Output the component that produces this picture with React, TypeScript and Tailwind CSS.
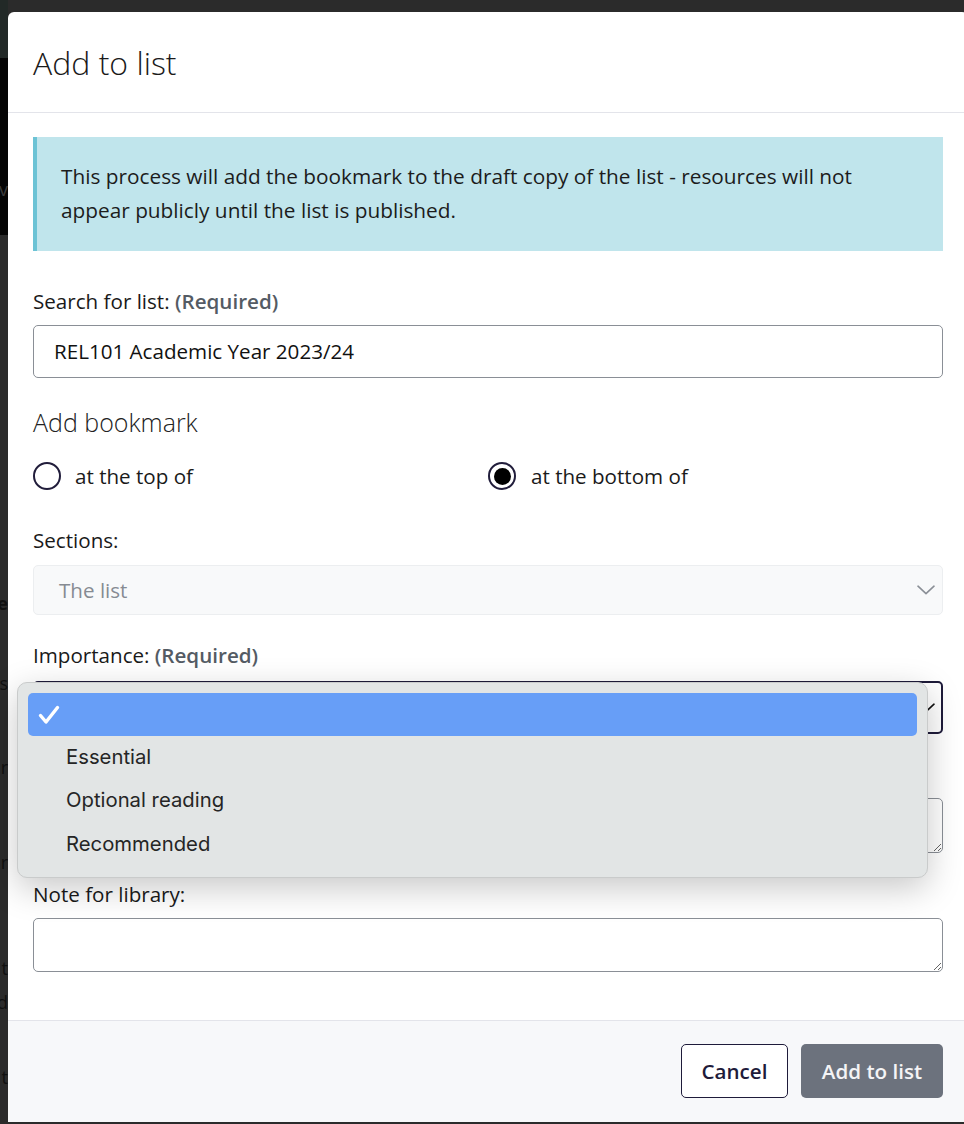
import React from "react";

const OPEN = { fontFamily: '"Open Sans", "Noto Sans", sans-serif' } as const;

function Chevron({ color }: { color: string }) {
  return (
    <svg width="18" height="10" viewBox="0 0 18 10" fill="none">
      <path d="M1 1.2 L9 8.6 L17 1.2" stroke={color} strokeWidth="1.6" strokeLinecap="round" strokeLinejoin="round" />
    </svg>
  );
}

function BgLetter({ gap, ch, bold }: { gap: number; ch: string; bold?: boolean }) {
  return (
    <div style={{ marginTop: gap }} className={`flex h-[27px] justify-end overflow-hidden whitespace-nowrap text-[18px] leading-[27px] text-[#101010] ${bold ? "font-bold" : ""}`}>
      <span>{ch}</span>
    </div>
  );
}

export default function App() {
  return (
    <div className="relative h-[1124px] w-[964px] overflow-hidden bg-[#2b2b2b]" style={OPEN}>
      {/* dimmed page behind the dialog */}
      <div className="flex h-full w-[8px] flex-col">
        <div className="h-[58px] bg-[#222927]" />
        <div className="flex h-[177px] flex-col bg-[#050505]">
          <div className="mt-[118px] flex h-[27px] justify-end overflow-hidden whitespace-nowrap text-[18px] leading-[27px] text-[#3c3c3c]">
            <span>Rev</span>
          </div>
        </div>
        <div className="flex flex-1 flex-col bg-[#2b2b2b]">
          <BgLetter gap={355} ch="The" bold />
          <BgLetter gap={53} ch="s" />
          <BgLetter gap={57} ch="r" />
          <BgLetter gap={68} ch="r" />
          <BgLetter gap={79} ch="t" />
          <BgLetter gap={7} ch="d" />
          <BgLetter gap={48} ch="t" />
        </div>
      </div>

      {/* dialog */}
      <div className="absolute left-[8px] top-[12px] flex w-[960px] flex-col overflow-visible rounded-[6px] bg-white text-[#1a1a1a]">
        <div className="border-b border-[#e3e4ea] pl-[25px] pt-[32px] pb-[30px]">
          <h1 className="text-[32px] font-light leading-[38px] text-[#1a1a1a]">Add to list</h1>
        </div>

        <div className="flex flex-col px-[25px] pt-[24px] pb-[48px] text-[20.6px]">
          <div className="h-[114px] border-l-4 border-[#6cc3d5] bg-[#c0e5ec] pl-[24px] pr-[28px] pt-[22px] text-[20.8px] leading-[34px] text-[#1c1c1c]">
            This process will add the bookmark to the draft copy of the list - resources will not appear publicly until the list is published.
          </div>

          <label className="mt-[37px] leading-[26px]">
            Search for list: <span className="font-semibold text-[#545b64]">(Required)</span>
          </label>
          <div className="mt-[11px] flex h-[53px] items-center rounded-[5px] border border-[#8a8f96] px-[20px] text-[#111]">
            REL101 Academic Year 2023/24
          </div>

          <h2 className="mt-[30px] text-[25px] font-light leading-[29px] text-[#222]">Add bookmark</h2>
          <div className="mt-[25px] grid h-[28px] grid-cols-2">
            <div className="flex items-center">
              <span className="h-[28px] w-[28px] shrink-0 rounded-full border-2 border-[#211d3b] bg-white" />
              <span className="ml-[14px] leading-[27px]">at the top of</span>
            </div>
            <div className="flex items-center">
              <span className="flex h-[28px] w-[28px] shrink-0 items-center justify-center rounded-full border-2 border-[#211d3b] bg-white">
                <span className="h-[17px] w-[17px] rounded-full bg-black" />
              </span>
              <span className="ml-[15px] leading-[27px]">at the bottom of</span>
            </div>
          </div>

          <label className="mt-[37px] leading-[27px]">Sections:</label>
          <div className="mt-[11px] flex h-[50px] items-center justify-between rounded-[5px] border border-[#eceef0] bg-[#f8f9fa] pl-[25px] pr-[7px] text-[#868b92]">
            <span>The list</span>
            <Chevron color="#8a8f96" />
          </div>

          <label className="mt-[27px] leading-[27px]">
            Importance: <span className="font-semibold text-[#545b64]">(Required)</span>
          </label>
          <div className="relative mt-[12px] h-[53px]">
            <div className="flex h-[53px] items-center justify-end rounded-[5px] border-2 border-[#1e1b3a] pr-[6px]">
              <Chevron color="#111" />
            </div>
            {/* native select popup */}
            <div
              className="absolute left-[-16px] top-[1px] z-10 flex h-[196px] w-[911px] flex-col rounded-[10px] border border-[#c9cbcb] bg-[#e2e5e5] p-[10px] shadow-[0_10px_34px_rgba(0,0,0,0.22)]"
              style={{ fontFamily: 'Inter, "Noto Sans", sans-serif' }}
            >
              <div className="flex h-[44px] items-center rounded-[5px] bg-[#679ef7] pl-[10px]">
                <svg width="22" height="20" viewBox="0 0 22 20" fill="none">
                  <path d="M2.5 10.5 L8 17 L19.5 2.5" stroke="#fff" strokeWidth="3.4" strokeLinecap="round" strokeLinejoin="round" />
                </svg>
              </div>
              <div className="flex h-[44px] items-center pb-[3px] pl-[38px] text-[20.3px] text-[#252525]">Essential</div>
              <div className="flex h-[44px] items-center pb-[3px] pl-[38px] text-[20.3px] text-[#252525]">Optional reading</div>
              <div className="flex h-[44px] items-center pb-[3px] pl-[38px] text-[20.3px] text-[#252525]">Recommended</div>
            </div>
          </div>

          <label className="mt-[25px] leading-[27px]">Note for student:</label>
          <textarea className="mt-[12px] h-[55px] rounded-[5px] border border-[#8a8f96] bg-white px-[20px] py-[10px] outline-none" />

          <label className="mt-[28px] leading-[27px]">Note for library:</label>
          <textarea className="mt-[10px] h-[54px] rounded-[5px] border border-[#8a8f96] bg-white px-[20px] py-[10px] outline-none" />
        </div>

        <div className="flex h-[102px] items-start justify-end gap-[13px] border-t border-[#e3e4ea] bg-[#f7f8fa] pt-[23px] pr-[25px]">
          <button className="h-[54px] w-[107px] rounded-[5px] border border-[#1e1b3a] bg-white text-[20.6px] font-semibold text-[#1e1b3a]">
            Cancel
          </button>
          <button className="h-[54px] w-[142px] rounded-[5px] bg-[#6c727d] text-[20.6px] font-semibold text-[#f4f4f6]">
            Add to list
          </button>
        </div>
      </div>
    </div>
  );
}
